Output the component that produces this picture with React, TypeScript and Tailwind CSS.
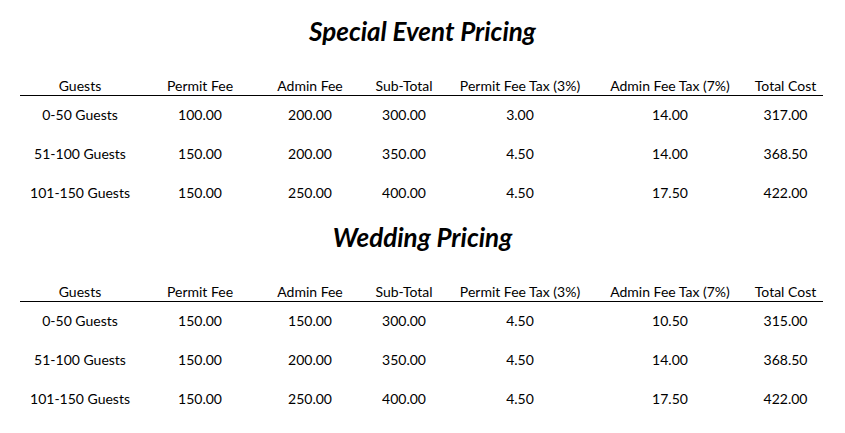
const headers = [
  "Guests",
  "Permit Fee",
  "Admin Fee",
  "Sub-Total",
  "Permit Fee Tax (3%)",
  "Admin Fee Tax (7%)",
  "Total Cost",
];

const widths = ["w-[120px]", "w-[120px]", "w-[100px]", "w-[88px]", "w-[144px]", "w-[156px]", "w-[75px]"];

const specialEvent = [
  ["0-50 Guests", "100.00", "200.00", "300.00", "3.00", "14.00", "317.00"],
  ["51-100 Guests", "150.00", "200.00", "350.00", "4.50", "14.00", "368.50"],
  ["101-150 Guests", "150.00", "250.00", "400.00", "4.50", "17.50", "422.00"],
];

const wedding = [
  ["0-50 Guests", "150.00", "150.00", "300.00", "4.50", "10.50", "315.00"],
  ["51-100 Guests", "150.00", "200.00", "350.00", "4.50", "14.00", "368.50"],
  ["101-150 Guests", "150.00", "250.00", "400.00", "4.50", "17.50", "422.00"],
];

const PriceTable = ({ title, rows, first }: { title: string; rows: string[][]; first?: boolean }) => (
  <section className={first ? "" : "mt-[11px]"}>
    <h2 className="h-[28px] pb-[2px] text-center text-[26px] leading-[26px] font-bold italic text-black">{title}</h2>
    <table className="mt-[31px] ml-[20px] w-[803px] table-fixed border-collapse text-[14px] text-black">
      <thead>
        <tr className="h-[18px] border-b border-black">
          {headers.map((h, i) => (
            <th key={h} className={`${widths[i]} p-0 text-center font-normal leading-[18px] whitespace-nowrap`}>
              {h}
            </th>
          ))}
        </tr>
      </thead>
      <tbody>
        {rows.map((row) => (
          <tr key={row[0]} className="h-[39px]">
            {row.map((cell, i) => (
              <td key={i} className="p-0 pb-[2px] text-center leading-[37px] whitespace-nowrap">
                {cell}
              </td>
            ))}
          </tr>
        ))}
      </tbody>
    </table>
  </section>
);

export default function App() {
  return (
    <div className="min-h-screen bg-white pt-[18px]" style={{ fontFamily: "Lato, 'Open Sans', sans-serif" }}>
      <PriceTable title="Special Event Pricing" rows={specialEvent} first />
      <PriceTable title="Wedding Pricing" rows={wedding} />
    </div>
  );
}
